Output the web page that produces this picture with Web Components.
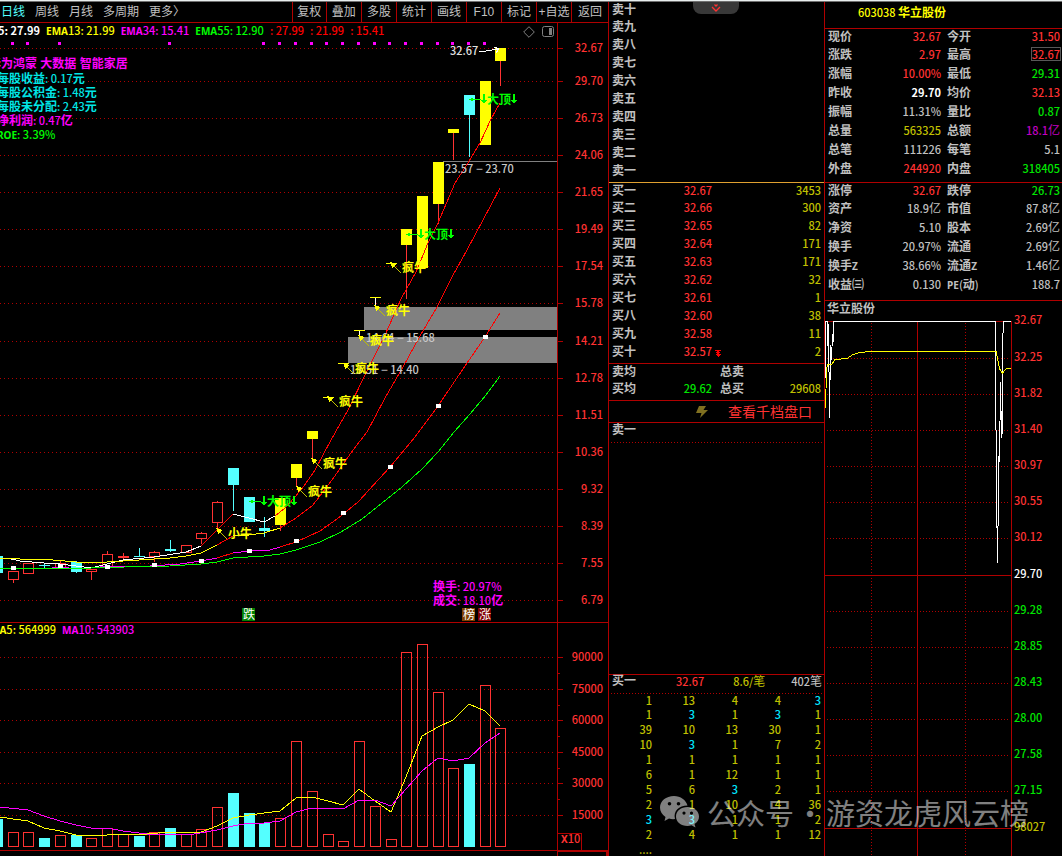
<!DOCTYPE html>
<html lang="zh-CN">
<head>
<meta charset="utf-8">
<title>603038 华立股份</title>
<style>
body{margin:0;background:#000;color:#c0c0c0;font:12px/14px "Liberation Sans","Noto Sans CJK SC",sans-serif;
--num:"Noto Sans CJK SC",sans-serif;--line:#b00000;--red:#ff3232;--green:#00e600;--olive:#c0c000;--cyan:#00e6ff;--body:#54ffff}
</style>
</head>
<body>
<trade-app></trade-app>
<script>
const BASE = `
*{box-sizing:border-box}
:host{display:block;min-width:0}
.n{font-family:var(--num);font-size:11px;font-weight:500}
.b{font-family:"Noto Sans",sans-serif;font-weight:700;font-size:10px}
.red{color:var(--red)}.green{color:var(--green)}.olive{color:var(--olive)}.cyan{color:var(--cyan)}
.white{color:#fff}.white .n{font-weight:700}.purple{color:#c000c0}.grey{color:#c0c0c0}
svg{display:block;width:100%;height:auto}
table{border-collapse:collapse;width:100%;table-layout:fixed}
th,td{padding:0;white-space:nowrap}
th{font-weight:700;text-align:left}
td{text-align:right}
button{font:inherit;color:inherit;background:none;border:0;padding:0;margin:0;cursor:pointer}
`;
/* Digits and Latin letters use different faces, so each run gets its own span. */
const mix = (t, tag = 'span') => t.replace(/[A-Z]+|[^A-Z\u0080-\uffff]+/g, m =>
  `<${tag} class="${/[A-Z]/.test(m) ? 'b' : 'n'}">${m}</${tag}>`);
const define = (name, css, html) => customElements.define(name, class extends HTMLElement {
  constructor() {
    super();
    this.attachShadow({mode: 'open'}).innerHTML = `<style>${BASE}${css}</style>` + html;
  }
});
const rect = (x, y, w, h, f) => `<rect x="${x}" y="${y}" width="${w}" height="${h}" fill="${f}"/>`;
const box = (x, y, w, h, s) => `<rect x="${x + .5}" y="${y + .5}" width="${w - 1}" height="${h - 1}" fill="none" stroke="${s}"/>`;
const path = (p, c) => `<polyline points="${p}" fill="none" stroke="${c}"/>`;
const dots = (x1, y1, x2, y2, gap = 3) => `<line x1="${x1}" y1="${y1}" x2="${x2}" y2="${y2}" stroke="#b00000" stroke-dasharray="1 ${gap}"/>`;
const text = (x, y, t, c, extra = '') => `<text x="${x}" y="${y + 4}" fill="${c}" ${extra}>${mix(t, 'tspan')}</text>`;
const END = 'text-anchor="end"', BOLD = 'font-weight="700"';
const XS = [-3,13,28,44,60,76,91,107,123,139,154,170,186,201,217,233,249,264,280,296,312,328,343,359,375,391,406,422,438,453,469,485,500];

/* ---------- period bar ---------- */
define('period-bar', `
:host{display:flex;height:21px;border-bottom:1px solid var(--line);justify-content:space-between}
nav{display:flex;gap:10px;padding-left:1px;align-items:center}
.on{color:#54ffff}
.tools{display:grid;grid-template-columns:34fr 35fr 35fr 35fr 35fr 35fr 35fr 35fr 37fr;width:52%;height:20px}
.tools button{border-left:1px solid var(--line);white-space:nowrap}
`, `<nav>${['日线','周线','月线','多周期','更多〉'].map((t, i) => `<button${i ? '' : ' class="on"'}>${t}</button>`).join('')}</nav>
<div class="tools">${['复权','叠加','多股','统计','画线','F10','标记','+自选','返回'].map(t => `<button>${t}</button>`).join('')}</div>`);

/* ---------- daily candles ---------- */
const LEVELS = [[48,'32.67'],[81,'29.70'],[118,'26.73'],[155,'24.06'],[192,'21.65'],[229,'19.49'],[266,'17.54'],[303,'15.78'],[341,'14.21'],[378,'12.78'],[415,'11.51'],[452,'10.36'],[489,'9.32'],[526,'8.39'],[563,'7.55'],[600,'6.79']];
/* x, kind (y limit-up, c falling, r rising), body top, body bottom, wick top, wick bottom */
const CANDLES = [[-3,'c',556,573],[13,'r',571,580,571,583],[28,'r',563,574],[44,'c',565,566,564,568],[60,'r',563,568,560,568],[76,'c',562,572,561,573],[91,'r',569,572,569,580],[107,'r',554,568,551,568],[123,'r',556,558,553,559],[139,'c',556,557,548,557],[154,'r',552,557,551,562],[170,'c',549,551,540,552],[186,'r',545,553],[201,'r',533,539,532,544],[217,'r',502,523,501,530],[233,'c',468,485,468,511],[249,'c',497,522],[264,'c',528,531,517,537],[280,'y',498,525,498,531],[296,'y',464,478,464,487],[312,'y',431,439,431,459],[328,'y',397,398],[343,'y',363,364],[359,'y',330,331],[375,'y',297,298],[391,'y',263,264],[406,'y',229,245,229,299],[422,'y',196,268],[438,'y',162,204,162,224],[453,'y',129,133,129,160],[469,'c',95,115,95,157],[485,'y',81,145],[500,'y',48,61,48,86]];
const down = (x, y) => `<path d="M${x} ${y - 5}h2v6h2l-3 4l-3 -4h2z" fill="#0f0"/>`;
const kline = () => {
  let s = '';
  for (const [y, t] of LEVELS) s += dots(0, y + .5, 554, y + .5) + rect(557, y, 6, 1, '#b00000') + text(603, y, t, '#ff3232', END);
  s += rect(364, 307, 193, 23, '#808080') + rect(348, 337, 209, 26, '#808080') + rect(443, 161, 114, 1, '#808080');
  for (const x of [11,26,58,168,262,278,294,310,325,341,357,373,388,404,420,436,451,467,483]) s += rect(x, 42, 3, 3, '#f0f');
  for (const [x, k, a, b, wa, wb] of CANDLES) {
    const c = k === 'c' ? '#54ffff' : k === 'y' ? '#ff0' : '#ff3232';
    if (wb) {
      const w = k === 'c' ? c : '#ff3232';
      if (wa < a) s += rect(x, wa, 1, a - wa, w);
      if (wb > b) s += rect(x, b, 1, wb - b, w);
    }
    s += k === 'r' && b - a > 2 ? box(x - 5, a, 11, b - a, c) : rect(x - 5, a, 11, b - a, c);
  }
  s += rect(375, 298, 1, 8, '#fff') + rect(359, 331, 1, 6, '#fff');
  s += path('7,558 20,561 44,563 60,564 76,566 91,568 107,564 123,560 154,557 186,552 201,546', '#fff');
  s += path('201,546 217,530 233,514', '#f00') + path('233,514 249,518 264,522 275,516', '#fff');
  s += path('275,516 285,508 295,497 304,486 315,470 331,440 348,410 366,373 385,335 401,299 416,272 428,243 438,223 455,183 468,163 480,143 491,119 500,103', '#f00');
  s += path('0,558 20,559 53,560 76,562 91,563 107,562 139,560 170,558 186,556 201,553 217,545', '#ff0') + path('217,545 233,536', '#f00');
  s += path('233,536 249,535 264,533 280,528', '#ff0') + path('280,528 296,518 313,505 332,480 353,450 367,432 385,398 403,367 420,336 437,307 452,277 467,250 483,220 500,188', '#f00');
  s += path('52,567 69,567', '#f0f') + path('100,567 150,566 180,564 201,561 217,558', '#f0f') + path('217,558 233,553', '#f00') + path('233,553 249,551 270,550 280,547', '#f0f');
  s += path('280,547 296,542 320,531 337,519 358,502 390,467 415,437 438,406 465,366 485,337 500,313', '#f00');
  s += path('0,568 91,568 125,567 170,566 201,564 217,562 233,558 264,556 280,554 296,550 320,542 341,532 362,519 382,503 402,487 422,469 438,452 454,432 470,414 486,395 500,376', '#0f0');
  for (const [x, y] of [[13,568],[60,566],[107,567],[154,565],[201,561],[249,551],[296,541],[343,513],[390,467],[438,406],[485,337]]) s += rect(x - 2, y - 2, 5, 4, '#fff');
  for (const [x, y, t] of [[445,169,'23.57 − 23.70'],[366,338,'14.64 − 15.68'],[350,370,'13.51 − 14.40']]) s += text(x, y, t, '#c8c8c8');
  for (const [x, y, t] of [[391,263,'疯牛'],[375,306,'疯牛'],[359,336,'疯牛'],[344,364,'疯牛'],[328,397,'疯牛'],[312,459,'疯牛'],[297,487,'疯牛'],[217,529,'小牛']])
    s += `<path d="M${x} ${y}l10 10" stroke="#c0c000" fill="none"/><path d="M${x - 1} ${y - 1}l7 2l-2 1l-1 1l-1 3z" fill="#ff0"/>` + text(x + 11, y + 5, t, '#ff0', BOLD);
  for (const [x, y] of [[249,501],[406,234],[469,99]])
    s += rect(x + 1, y, 11, 1, '#0f0') + `<path d="M${x} ${y + .5}l4 -2v4z" fill="#0f0"/>` + down(x + 14, y) + text(x + 18, y + 1, '大顶', '#0f0', BOLD) + down(x + 44, y);
  s += text(450, 51, '32.67', '#e0e0e0') + path('479,52 499,49', '#fff') + path('494,47 499,49 496,53', '#fff');
  s += text(433, 587, '换手: 20.97%', '#f0f', BOLD) + text(433, 601, '成交: 18.10亿', '#f0f', BOLD);
  for (const [x, t, c] of [[242,'跌','#008000'],[462,'榜','#804000'],[478,'涨','#800000']]) s += rect(x, 608, 13, 13, c) + text(x + 1, 615, t, '#fff');
  return s + rect(557, 38, 1, 584, '#b00000');
};

define('kline-panel', `
:host{position:relative;border-bottom:1px solid var(--line)}
header{display:flex;height:15px;align-items:center;white-space:nowrap}
.ema{display:flex;flex:1;gap:6px;margin-left:-24px;font-weight:700}
.icons{display:flex;gap:7px;padding:3px 3px 0 0}
.icons svg{width:12px;height:12px}
.axis{width:51px;height:15px;border-left:1px solid var(--line)}
.facts{position:absolute;left:-3px;top:34px;margin:0;padding:0;list-style:none;font-weight:700;white-space:nowrap;color:#00e6e6}
.facts li{height:14px}
.facts li:first-child{margin-left:-8px}
`, `<header><div class="ema"><span class="white">${mix('EMA5: 27.99')}</span><span style="color:#ff0">${mix('EMA13: 21.99')}</span><span style="color:#f0f">${mix('EMA34: 15.41')}</span><span style="color:#0f0">${mix('EMA55: 12.90')}</span><span style="color:#f00">${mix(': 27.99')}</span><span style="color:#f00">${mix(': 21.99')}</span><span style="color:#f00">${mix(': 15.41')}</span></div>
<div class="icons"><svg viewBox="0 0 12 12"><path d="M6 .7L11.300 6L6 11.300L.7 6z" fill="none" stroke="#808080"/></svg><svg viewBox="0 0 12 12"><rect x=".5" y=".5" width="11" height="10" rx="2" fill="none" stroke="#808080"/><rect x="7" y="2" width="3" height="7" fill="#808080"/></svg></div><div class="axis"></div></header>
<svg viewBox="0 38 608 584" shape-rendering="crispEdges">${kline()}</svg>
<ul class="facts"><li style="color:#f0f">华为鸿蒙 大数据 智能家居</li><li>${mix('每股收益: 0.17元')}</li><li>${mix('每股公积金: 1.48元')}</li><li>${mix('每股未分配: 2.43元')}</li><li style="color:#f0f">${mix('净利润: 0.47亿')}</li><li style="color:#0f0">${mix('ROE: 3.39%')}</li></ul>`);

/* ---------- volume ---------- */
const VOL = [-819,832,832,-838,835,-835,838,828,834,-836,832,-828,834,829,807,-793,-813,-823,818,741,791,834,841,741,806,839,652,644,692,768,-764,685,728];
const volume = () => {
  let s = '';
  for (const [y, t] of [[657,'90000'],[689,'75000'],[720,'60000'],[752,'45000'],[783,'30000'],[815,'15000']]) s += dots(0, y + .5, 554, y + .5) + rect(557, y, 6, 1, '#b00000') + text(603, y, t, '#ff3232', END);
  for (const y of [673,705,736,768,799]) s += rect(557, y, 3, 1, '#b00000');
  VOL.forEach((v, i) => { const y = Math.abs(v); s += v < 0 ? rect(XS[i] - 5, y, 11, 847 - y, '#54ffff') : box(XS[i] - 5, y, 11, 847 - y, '#ff3232'); });
  s += path('0,817 13,819 28,821 44,828 60,831 76,835 91,836 107,835 123,834 147,834 170,832 186,833 201,832 217,826 233,818 249,815 280,811 296,798 312,797 328,801 343,805 359,789 375,801 391,812 406,777 422,736 438,727 453,720 469,704 485,711 500,726', '#ff0');
  s += path('0,807 28,810 44,816 60,821 76,825 91,828 107,828 123,831 147,834 194,834 217,830 233,826 249,823 264,823 280,821 296,812 312,808 328,808 343,809 359,800 375,800 391,806 406,789 422,771 438,758 453,761 469,758 485,743 500,733', '#f0f');
  s += rect(557, 636, 1, 220, '#b00000') + box(557, 833, 25, 18, '#b00000') + text(561, 839, 'X10', '#ff3232');
  return s + rect(0, 850, 558, 1, '#b00000') + rect(557, 850, 51, 2, '#b00000') + rect(606, 850, 2, 6, '#b00000');
};
define('volume-panel', `
header{display:flex;height:13px;gap:6px;font-weight:700;white-space:nowrap}
.ma{display:flex;flex:1;gap:6px;margin-left:-10px;align-items:center}
.axis{width:51px;border-left:1px solid var(--line)}
`, `<header><div class="ma"><span style="color:#ff0">${mix('MA5: 564999')}</span><span style="color:#f0f">${mix('MA10: 543903')}</span></div><div class="axis"></div></header>
<svg viewBox="0 636 608 220" shape-rendering="crispEdges">${volume()}</svg>`);

/* ---------- order book ---------- */
const CN = ['一','二','三','四','五','六','七','八','九','十'];
const BIDS = [['32.67',3453],['32.66',300],['32.65',82],['32.64',171],['32.63',171],['32.62',32],['32.61',1],['32.60',38],['32.58',11],['32.57',2]];
define('order-book', `
:host{position:relative}
.group{padding-bottom:2px;border-bottom:1px solid var(--line)}
.group.asks{border-color:#e0a030}
tr{height:18px}
tr:first-child{height:16px}
th{padding-left:3px}
th.sum{padding-left:8px}
td:last-child{padding-right:3px}
.n{line-height:12px}
.l{width:43px}.p{width:60px}
.p10{position:relative}
.p10 svg{position:absolute;left:100%;top:7px;width:6px;height:7px;margin-left:3px}
.pull{position:absolute;top:0;left:84px;width:46px;height:12px;background:#383838;border-radius:0 0 8px 8px;display:grid;place-items:center}
.pull svg{width:10px;height:8px}
.more{display:flex;align-items:center;height:22px;padding-left:87px;border-bottom:1px solid var(--line);color:var(--red);font-size:14px;gap:20px;text-decoration:none}
.more svg{width:12px;height:14px}
`, `<div class="group asks"><table><col class="l"><col class="p"><col><col><tbody>${[...CN].reverse().map(c => `<tr><th>卖${c}</th><td></td><td></td><td></td></tr>`).join('')}</tbody></table></div>
<div class="group"><table><col class="l"><col class="p"><col><col><tbody>${BIDS.map(([p, v], i) => `<tr><th>买${CN[i]}</th><td class="red${i === 9 ? ' p10' : ''}"><span class="n">${p}</span>${i === 9 ? '<svg viewBox="0 0 6 7" shape-rendering="crispEdges"><path d="M0 0h6v1h-6zM2 1h2v1h2l-3 2l-3 -2h2zM0 4h6l-3 3z" fill="#ff0000"/></svg>' : ''}</td><td></td><td class="olive"><span class="n">${v}</span></td></tr>`).join('')}</tbody></table></div>
<div class="group"><table><col class="l"><col class="p"><col><col><tbody><tr><th>卖均</th><td></td><th class="sum">总卖</th><td></td></tr><tr><th>买均</th><td class="green"><span class="n">29.62</span></td><th class="sum">总买</th><td class="olive"><span class="n">29608</span></td></tr></tbody></table></div>
<a class="more" href="#depth"><svg viewBox="0 0 12 14"><path d="M3 1h7L7.500 5H12L4 13L5.500 8H0z" fill="#807020"/></svg>查看千档盘口</a>
<button class="pull" aria-label="展开"><svg viewBox="0 0 10 8"><path d="M1 3L5 7L9 3M3.500 .5L5 2L6.500 .5" fill="none" stroke="#ff3232" stroke-width="1.300"/></svg></button>`);

/* ---------- order queue ---------- */
const QUEUE = ['1 13 4 4 3','1 3 1 3 1','39 10 13 30 1','10 3 1 7 2','1 1 1 1 1','6 1 12 1 1','5 6 3 2 1','2 1 10 4 36','3 3 1 1 2','2 4 1 1 12'];
define('order-queue', `
:host{display:flex;flex-direction:column;flex:1}
.sell{flex:1}
.sell h3,.buy{margin:0;padding:0 2px 0 3px;font-size:12px;line-height:14px}
.dots{display:block;height:1px;margin:5px 2px 0;background:repeating-linear-gradient(90deg,var(--line) 0 1px,transparent 1px 3px)}
.buy{border-top:1px solid var(--line);display:grid;grid-template-columns:44% 29% 27%;text-align:right;position:relative;height:15px;line-height:12px}
.buy b{position:absolute;left:3px}
.buy+.dots{margin-top:4px}
td{line-height:12px}
tr{height:15px}
tr:first-child{height:12px}
tr:last-child{height:15px}
td:nth-child(5){padding-right:3px}
`, `<div class="sell"><h3>卖一</h3><i class="dots"></i></div>
<div class="buy"><b>买一</b><span class="red n">32.67</span><span class="olive">${mix('8.6/笔')}</span><span>${mix('402笔')}</span></div><i class="dots"></i>
<table><tbody>${QUEUE.map(r => `<tr>${r.split(' ').map(v => `<td class="n ${v === '3' ? 'cyan' : 'olive'}">${v}</td>`).join('')}</tr>`).join('')}<tr><td class="n olive">....</td><td></td><td></td><td></td><td></td></tr></tbody></table>`);

/* ---------- quote ---------- */
const Q1 = [['现价','32.67','red','今开','31.50','red'],['涨跌','2.97','red','最高','32.67','red hi'],['涨幅','10.00%','red','最低','29.31','green'],['昨收','29.70','white','均价','32.13','red'],['振幅','11.31%','grey','量比','0.87','green'],['总量','563325','olive','总额','18.1亿','purple'],['总笔','111226','grey','每笔','5.1','grey'],['外盘','244920','red','内盘','318405','green']];
const Q2 = [['涨停','32.67','red','跌停','26.73','green'],['资产','18.9亿','grey','市值','87.8亿','grey'],['净资','5.10','grey','股本','2.69亿','grey'],['换手','20.97%','grey','流通','2.69亿','grey'],['换手Z','38.66%','grey','流通Z','1.46亿','grey'],['收益㈢','0.130','grey','PE(动)','188.7','grey']];
const quoteTable = (q, c) => `<div class="group ${c}"><table><col style="width:17%"><col style="width:32%"><col style="width:19%"><col><tbody>${q.map(r => `<tr><th>${mix(r[0])}</th><td class="${r[2]}"><span>${mix(r[1])}</span></td><th>${mix(r[3])}</th><td class="${r[5]}"><span>${mix(r[4])}</span></td></tr>`).join('')}</tbody></table></div>`;
define('quote-grid', `
h1{margin:0;height:27px;padding:4px 0 0 33px;font-size:12px;line-height:14px;color:#ff0;border-bottom:1px solid var(--line)}
.group{padding-bottom:4px;border-bottom:1px solid var(--line)}
.group.last{padding-bottom:6px}
tr{height:19px}
tr:first-child{height:16px}
th{padding-left:3px}
th:nth-child(3){padding-left:6px}
td:last-child{padding-right:2px}
.n{line-height:12px}
.hi span span{display:inline-block;outline:1px solid #585858}
`, `<h1>${mix('603038 华立股份')}</h1>${quoteTable(Q1, '')}${quoteTable(Q2, 'last')}`);

/* ---------- intraday ---------- */
const minute = () => {
  let s = '';
  [[321,'32.67'],[358,'32.25'],[394,'31.82'],[430,'31.40'],[466,'30.97'],[502,'30.55'],[538,'30.12'],[575,'29.70'],[611,'29.28'],[647,'28.85'],[683,'28.43'],[719,'28.00'],[755,'27.58'],[791,'27.15'],[828,'98027']].forEach(([y, t], i) => {
    s += i % 7 ? dots(827, y + .5, 1010, y + .5, 2) : rect(825, y, 187, 1, '#b00000');
    s += text(1014, y - 1, t, i < 7 ? '#ff3232' : i === 7 ? '#fff' : i < 14 ? '#00e600' : '#c0c000');
  });
  s += dots(871.5, 323, 871.5, 856, 2) + dots(965.5, 323, 965.5, 856, 2) + rect(917, 321, 1, 535, '#b00000') + rect(1011, 321, 1, 535, '#b00000');
  s += path('825.5,378 825.5,321.5 827.5,321.5 828.5,370 828.5,324 829.5,418 830.5,345 831.5,360 832.5,334 833.5,342 833.5,321.5 995.5,321.5 995.5,368 996.5,490 997.5,563 998.5,492 999.5,422 999.5,462 1000.5,382 1001.5,438 1002.5,430 1002.5,346 1003.5,321.5 1011,321.5', '#fff');
  s += path('825.5,408 826.5,370 827.5,365 832,364 835,359.500 847,358.500 853,354.500 860,352.500 871,351.500 996,351.500 997.5,358 999.5,369 1002.5,373 1006.5,368.500 1011,368.500', '#ff0');
  return s;
};
define('minute-chart', `
h2{margin:0;height:14px;padding:1px 0 0 2px;font-size:12px;line-height:14px}
`, `<h2>华立股份</h2><svg viewBox="825 315 237 541" shape-rendering="crispEdges">${minute()}</svg>`);

/* ---------- watermark ---------- */
define('water-mark', `
:host{position:absolute;right:33px;bottom:27px;display:flex;align-items:center;font:29px/36px "Noto Sans CJK SC",sans-serif;color:#fff;opacity:.5;white-space:nowrap;pointer-events:none}
svg{width:40px;height:32px;margin-right:7px}
i{width:32px;text-align:center;font-style:normal}
`, `<svg viewBox="0 0 40 32"><path fill="#fff" fill-rule="evenodd" d="M14 0C6 0 0 5 0 11.500C0 15.500 2 18.500 5.500 21L4.500 25L9 22.500Q12 23.500 15 23C13 15 19 9.500 27.500 9.500C26 4 20.500 0 14 0zM9.500 6a1.800 1.800 0 1 1 0 3.600a1.800 1.800 0 1 1 0-3.600zM18.500 6a1.800 1.800 0 1 1 0 3.600a1.800 1.800 0 1 1 0-3.600z"/><path fill="#fff" fill-rule="evenodd" d="M27.500 11C21 11 16 15 16 20.500S21 30 27.500 30Q29.500 30 31.500 29.300L35.500 31.500L34.500 28C37.500 26 39 23.500 39 20.500C39 15 34 11 27.500 11zM24 15.500a1.600 1.600 0 1 1 0 3.200a1.600 1.600 0 1 1 0-3.200zM31.500 15.500a1.600 1.600 0 1 1 0 3.200a1.600 1.600 0 1 1 0-3.200z"/></svg>公众号<i>·</i>游资龙虎风云榜`);

/* ---------- shell ---------- */
define('trade-app', `
:host{position:relative;min-height:100vh;border-top:1px solid #e8eeee;overflow:hidden}
main{display:grid;grid-template-columns:608fr 216fr 238fr;border-top:1px solid #707070}
section{min-width:0;display:flex;flex-direction:column}
section+section{border-left:1px solid var(--line)}
`, `<main><section><period-bar></period-bar><kline-panel></kline-panel><volume-panel></volume-panel></section>
<section><order-book></order-book><order-queue></order-queue></section>
<section><quote-grid></quote-grid><minute-chart></minute-chart></section></main><water-mark></water-mark>`);
</script>
</body>
</html>
